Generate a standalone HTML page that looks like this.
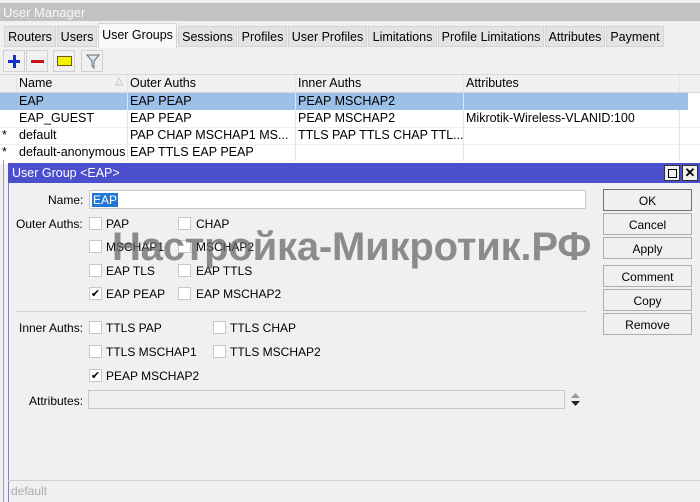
<!DOCTYPE html>
<html><head><meta charset="utf-8"><style>
*{margin:0;padding:0;box-sizing:border-box}
body{width:700px;height:502px;overflow:hidden;background:#f0f0f0;font-family:"Liberation Sans",sans-serif;font-size:12.5px;color:#000;position:relative}
.a{position:absolute;white-space:nowrap}
.tab{position:absolute;top:26px;height:21px;background:#e3e3e3;border:1px solid #d4d4d4;padding:3px 0 0;text-align:center;font-size:12.5px}
.tb{position:absolute;top:50px;width:22px;height:22px;border:1px solid #d0d0d0;background:#f0f0f0}
.cell{position:absolute;height:17px;border-right:1px solid #e4e4e4;padding:1px 0 0 2px;white-space:nowrap;overflow:hidden}
.cb{position:absolute;width:13px;height:13px;background:#fff;border:1px solid #c8c8c8}
.btn{position:absolute;left:603px;width:89px;height:22px;border:1px solid #adadad;background:#f0f0f0;text-align:center;font-size:12px;padding-top:4px}
.lbl{position:absolute;font-size:12px}
</style></head><body>
<div class="a" style="left:0;top:3px;width:700px;height:18px;background:#c2c2c2;color:#f8f8f8;padding:2px 0 0 3px;font-size:13px">User Manager</div>
<div class="a" style="left:0;top:21px;width:700px;height:29px;background:#f0f0f0"></div>
<div class="tab" style="left:4px;width:52px">Routers</div>
<div class="tab" style="left:57px;width:40px">Users</div>
<div class="tab" style="left:98px;top:23px;height:25px;width:79px;background:#f8f8f8;border-bottom:none;padding-top:4px">User Groups</div>
<div class="tab" style="left:178px;width:59px">Sessions</div>
<div class="tab" style="left:238px;width:49px">Profiles</div>
<div class="tab" style="left:288px;width:79px">User Profiles</div>
<div class="tab" style="left:368px;width:69px">Limitations</div>
<div class="tab" style="left:438px;width:106px">Profile Limitations</div>
<div class="tab" style="left:545px;width:60px">Attributes</div>
<div class="tab" style="left:606px;width:58px">Payment</div>
<div class="tb" style="left:3px"><div class="a" style="left:4px;top:9px;width:12px;height:3px;background:#1030d0"></div><div class="a" style="left:8.5px;top:4px;width:3px;height:13px;background:#1030d0"></div></div>
<div class="tb" style="left:26px"><div class="a" style="left:4px;top:9px;width:13px;height:3px;background:#d01010"></div></div>
<div class="tb" style="left:53px"><div class="a" style="left:3px;top:5px;width:15px;height:10px;background:#f4f000;border:1px solid #606000"></div></div>
<div class="tb" style="left:81px"><svg class="a" style="left:4px;top:3px" width="14" height="15"><path d="M1 1H13L8 7V14L6 12V7Z" fill="#dde6f0" stroke="#607080"/></svg></div>
<div class="a" style="left:0;top:74px;width:700px;height:90px;background:#fff;border-top:1px solid #d8d8d8"></div>
<div class="a" style="left:0;top:75px;width:700px;height:18px;background:#f0f0f0;border-bottom:1px solid #d8d8d8"></div>
<div class="cell" style="left:0;top:75px;width:17px"></div>
<div class="cell" style="left:17px;top:75px;width:111px">Name<span style="position:absolute;right:4px;color:#aaa;font-size:10px">△</span></div>
<div class="cell" style="left:128px;top:75px;width:168px">Outer Auths</div>
<div class="cell" style="left:296px;top:75px;width:168px">Inner Auths</div>
<div class="cell" style="left:464px;top:75px;width:216px">Attributes</div>
<div class="a" style="left:0;top:93px;width:688px;height:17px;background:#9cc0e8"></div>
<div class="cell" style="left:17px;top:93px;width:111px">EAP</div><div class="cell" style="left:128px;top:93px;width:168px">EAP PEAP</div><div class="cell" style="left:296px;top:93px;width:168px">PEAP MSCHAP2</div>
<div class="cell" style="left:17px;top:110px;width:111px">EAP_GUEST</div><div class="cell" style="left:128px;top:110px;width:168px">EAP PEAP</div><div class="cell" style="left:296px;top:110px;width:168px">PEAP MSCHAP2</div><div class="cell" style="left:464px;top:110px;width:216px">Mikrotik-Wireless-VLANID:100</div>
<div class="cell" style="left:0;top:127px;width:17px;border:none">*</div><div class="cell" style="left:17px;top:127px;width:111px">default</div><div class="cell" style="left:128px;top:127px;width:168px">PAP CHAP MSCHAP1 MS...</div><div class="cell" style="left:296px;top:127px;width:168px">TTLS PAP TTLS CHAP TTL...</div><div class="cell" style="left:464px;top:127px;width:216px"></div>
<div class="cell" style="left:0;top:144px;width:17px;border:none">*</div><div class="cell" style="left:17px;top:144px;width:111px">default-anonymous</div><div class="cell" style="left:128px;top:144px;width:168px">EAP TTLS EAP PEAP</div><div class="cell" style="left:296px;top:144px;width:168px"></div><div class="cell" style="left:464px;top:144px;width:216px"></div>
<div class="a" style="left:0;top:127px;width:700px;height:0;border-top:1px solid #eee"></div>
<div class="a" style="left:0;top:144px;width:700px;height:0;border-top:1px solid #eee"></div>
<div class="a" style="left:3px;top:160px;width:1px;height:342px;background:#a0a0a0"></div>
<div class="a" style="left:8px;top:163px;width:692px;height:339px;background:#f0f0f0;border-left:1px solid #8080c0"></div>
<div class="a" style="left:8px;top:163px;width:692px;height:20px;background:#4b4fcc;color:#fff;padding:3px 0 0 4px;font-size:12.5px">User Group &lt;EAP&gt;</div>
<div class="a" style="left:664px;top:165px;width:16px;height:16px;background:#f0f0f0;border:1px solid #333"><div class="a" style="left:3px;top:3px;width:9px;height:9px;border:1px solid #000"></div></div>
<div class="a" style="left:682px;top:165px;width:16px;height:16px;background:#f0f0f0;border:1px solid #333;font-size:13px;text-align:center;line-height:14px;font-weight:bold">✕</div>
<div class="lbl" style="left:48px;top:193px">Name:</div>
<div class="a" style="left:89px;top:190px;width:497px;height:19px;background:#fff;border:1px solid #c8c8c8"><span style="position:absolute;left:2px;top:2px;background:#1f78d7;color:#fff;font-size:12px;padding:0 1px">EAP</span></div>
<div class="lbl" style="left:16px;top:217px">Outer Auths:</div>
<div class="cb" style="left:89px;top:217px"></div><div class="lbl" style="left:106px;top:217px">PAP</div>
<div class="cb" style="left:178px;top:217px"></div><div class="lbl" style="left:196px;top:217px">CHAP</div>
<div class="cb" style="left:89px;top:240px"></div><div class="lbl" style="left:106px;top:240px">MSCHAP1</div>
<div class="cb" style="left:178px;top:240px"></div><div class="lbl" style="left:196px;top:240px">MSCHAP2</div>
<div class="cb" style="left:89px;top:264px"></div><div class="lbl" style="left:106px;top:264px">EAP TLS</div>
<div class="cb" style="left:178px;top:264px"></div><div class="lbl" style="left:196px;top:264px">EAP TTLS</div>
<div class="cb" style="left:89px;top:287px;font-size:11px;line-height:12px;text-align:center">✔</div><div class="lbl" style="left:106px;top:287px">EAP PEAP</div>
<div class="cb" style="left:178px;top:287px"></div><div class="lbl" style="left:196px;top:287px">EAP MSCHAP2</div>
<div class="a" style="left:16px;top:311px;width:570px;height:1px;background:#d0d0d0"></div>
<div class="lbl" style="left:19px;top:321px">Inner Auths:</div>
<div class="cb" style="left:89px;top:321px"></div><div class="lbl" style="left:106px;top:321px">TTLS PAP</div>
<div class="cb" style="left:213px;top:321px"></div><div class="lbl" style="left:230px;top:321px">TTLS CHAP</div>
<div class="cb" style="left:89px;top:345px"></div><div class="lbl" style="left:106px;top:345px">TTLS MSCHAP1</div>
<div class="cb" style="left:213px;top:345px"></div><div class="lbl" style="left:230px;top:345px">TTLS MSCHAP2</div>
<div class="cb" style="left:89px;top:369px;font-size:11px;line-height:12px;text-align:center">✔</div><div class="lbl" style="left:106px;top:369px">PEAP MSCHAP2</div>
<div class="lbl" style="left:29px;top:394px">Attributes:</div>
<div class="a" style="left:88px;top:390px;width:477px;height:19px;background:#f0f0f0;border:1px solid #c8c8c8"></div>
<svg class="a" style="left:570px;top:392px" width="11" height="16"><path d="M1 6L5.5 1L10 6Z" fill="#999"/><path d="M1 9H10L5.5 14Z" fill="#222"/></svg>
<div class="btn" style="top:189px;border-color:#707070">OK</div>
<div class="btn" style="top:213px">Cancel</div>
<div class="btn" style="top:237px">Apply</div>
<div class="btn" style="top:265px">Comment</div>
<div class="btn" style="top:289px">Copy</div>
<div class="btn" style="top:313px">Remove</div>
<div class="a" style="left:112px;top:225px;font-size:40px;font-weight:bold;color:rgba(100,100,100,0.72);letter-spacing:-0.2px">Настройка-Микротик.РФ</div>
<div class="a" style="left:8px;top:480px;width:692px;height:1px;background:#d0d0d0"></div>
<div class="a" style="left:11px;top:484px;color:#aaa;font-size:12px">default</div>
</body></html>
